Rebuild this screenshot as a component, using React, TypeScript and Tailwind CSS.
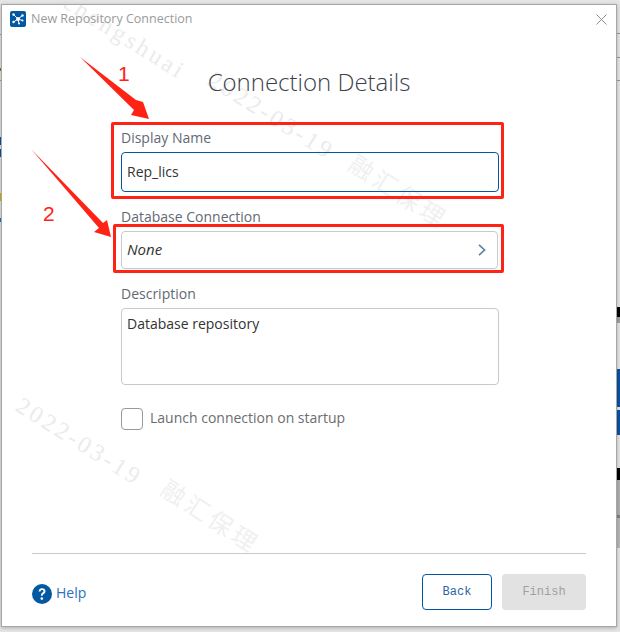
import React from 'react';

const sans = 'font-["Open_Sans","Noto_Sans",sans-serif]';

const Watermark = ({ text, className }: { text: string; className: string }) => (
  <span
    className={`absolute whitespace-nowrap origin-top-left font-['Liberation_Serif','Noto_Sans_CJK_SC',serif] pointer-events-none ${className}`}
  >
    {text}
  </span>
);

// red callout arrow, drawn on top of the screenshot
const Arrow = ({ className, d, w, h }: { className: string; d: string; w: number; h: number }) => (
  <svg className={`absolute ${className}`} width={w} height={h} viewBox={`0 0 ${w} ${h}`}>
    <path d={d} fill="#ff2316" />
  </svg>
);

export default function App() {
  return (
    <div className={`relative flex w-[620px] h-[632px] overflow-hidden bg-[#e6e6e6] ${sans}`}>
      {/* what shows of the window behind the dialog, left edge */}
      <div className="flex flex-col w-px shrink-0">
        <div className="h-[34px]" />
        <div className="h-px bg-[#999]" />
        <div className="h-[33px]" />
        <div className="h-[3px] bg-[#a06a20]" />
        <div className="h-[9px]" />
        <div className="h-px bg-[#999]" />
        <div className="h-[56px]" />
        <div className="h-[8px] bg-[#0a53a8]" />
        <div className="h-[4px]" />
        <div className="h-[8px] bg-[#0a53a8]" />
        <div className="h-[36px]" />
        <div className="h-[8px] bg-[#e0b000]" />
        <div className="h-[17px]" />
        <div className="h-[4px] bg-[#0a7ad0]" />
      </div>

      <div className="relative mt-[4px] w-[616px] h-[623px] shrink-0 flex flex-col overflow-hidden border border-[#a6a6a6] bg-white shadow-[0_1px_4px_rgba(0,0,0,0.25)]">
        {/* watermarks sit under the form */}
        <Watermark text="chengshuai" className="left-[73px] top-[-21px] text-[24px] text-[#ebebeb] rotate-[32deg] tracking-[3.2px]" />
        <Watermark text="2022-03-19" className="left-[218px] top-[57px] text-[24px] text-[#ebebeb] rotate-[32deg] tracking-[3.2px]" />
        <Watermark text="融汇保理" className="left-[359px] top-[142px] text-[24px] text-[#f0f0f0] rotate-[33deg] tracking-[4px]" />
        <Watermark text="2022-03-19" className="left-[26px] top-[383px] text-[24px] text-[#ebebeb] rotate-[32deg] tracking-[3.2px]" />
        <Watermark text="融汇保理" className="left-[171px] top-[467px] text-[24px] text-[#f0f0f0] rotate-[33deg] tracking-[4px]" />

        <div className="relative flex items-center h-[22px] mt-[3px] pl-[8px] pr-[9px]">
          <svg width="16" height="16" viewBox="0 0 16 16" className="shrink-0">
            <rect width="16" height="16" rx="2" fill="#0358a2" />
            <g stroke="#fff" strokeWidth="1">
              <path d="M8 8 3.5 3.5M8 8l4.5-3.5M8 8l4.5 1.5M8 8l-4.5 3M8 8l1 4.5" />
            </g>
            <g fill="#fff">
              <circle cx="8" cy="8" r="2" />
              <circle cx="3.5" cy="3.5" r="1.2" />
              <circle cx="12.5" cy="4.5" r="1.2" />
              <circle cx="12.5" cy="9.5" r="1" />
              <circle cx="3.5" cy="11" r="1.2" />
              <circle cx="9" cy="12.5" r="1" />
            </g>
          </svg>
          <span className="ml-[5px] text-[12.5px] text-[#9b9b9b]">New Repository Connection</span>
          <svg width="11" height="11" viewBox="0 0 11 11" className="ml-auto" stroke="#8c8c8c" strokeWidth="1">
            <path d="M.5.5l10 10M10.5.5l-10 10" />
          </svg>
        </div>

        <h1 className="relative mt-[36px] text-center text-[24px] leading-[32px] font-light text-[#3b3f4c]">Connection Details</h1>

        <div className="relative flex flex-col w-[378px] ml-[119px] mt-[30px] text-[14px]">
          <label className="h-[19px] leading-[19px] text-[#636973]">Display Name</label>
          <div className="mt-[5px] flex items-center h-[40px] px-[5px] pb-[2px] rounded-[4px] border border-[#0058a3] text-[#333]">Rep_lics</div>

          <label className="mt-[15px] h-[19px] leading-[19px] text-[#636973]">Database Connection</label>
          <div className="mt-[5px] flex items-center justify-between h-[38px] w-[377px] pl-[5px] pr-[11px] rounded-[4px] border border-[#c9c9c9] italic text-[15px] text-[#333]">
            <span className="-translate-y-px">None</span>
            <svg width="8" height="12" viewBox="0 0 8 12" fill="none" stroke="#5b7f9f" strokeWidth="1.6">
              <path d="M1 .8 6.6 6 1 11.2" />
            </svg>
          </div>

          <label className="mt-[15px] h-[19px] leading-[19px] text-[#636973]">Description</label>
          <div className="mt-[5px] h-[77px] px-[5px] pt-[5px] rounded-[4px] border border-[#c9c9c9] text-[#333] leading-[19px]">Database repository</div>

          <div className="mt-[22px] flex items-center">
            <span className="w-[22px] h-[22px] rounded-[4px] border border-[#999]" />
            <span className="ml-[7px] pb-[2px] text-[#6d6d6d]">Launch connection on startup</span>
          </div>
        </div>

        <div className="relative mt-auto mx-[30px] border-t border-[#c9c9c9] h-[73px] flex items-start pt-[20px]">
          <div className="mt-[8px] flex items-center gap-[4px]">
            <svg width="20" height="20" viewBox="0 0 20 20">
              <circle cx="10" cy="10" r="10" fill="#0358a2" />
              <path d="M6.6 7.6c.1-2.1 1.5-3.3 3.5-3.3s3.4 1.1 3.4 2.9c0 1.3-.7 2-1.7 2.7-.8.5-1.1.9-1.1 1.8H8.9c0-1.5.4-2.2 1.4-2.9.8-.5 1.2-.9 1.2-1.5 0-.7-.6-1.2-1.4-1.2-.9 0-1.5.5-1.6 1.5z" fill="#fff" />
              <circle cx="9.8" cy="14.6" r="1.3" fill="#fff" />
            </svg>
            <span className="pb-[2px] text-[14px] text-[#2a6fc0]">Help</span>
          </div>
          <div className="ml-auto flex gap-[10px] font-['Liberation_Mono',monospace] text-[12px]">
            <button className="w-[70px] h-[36px] rounded-[4px] border border-[#0058a3] bg-white text-[#2f62a8]">Back</button>
            <button className="w-[84px] h-[36px] rounded-[4px] bg-[#e2e2e2] text-[#a0a0a0]">Finish</button>
          </div>
        </div>
      </div>

      {/* right edge */}
      <div className="flex flex-col w-[3px] shrink-0">
        <div className="h-[33px]" />
        <div className="h-px bg-[#999]" />
        <div className="h-[23px]" />
        <div className="h-px bg-[#999]" />
        <div className="h-[22px]" />
        <div className="h-px bg-[#999]" />
        <div className="h-[226px]" />
        <div className="h-[10px] bg-black" />
        <div className="h-[6px] bg-[#a0a0a0]" />
        <div className="h-[46px]" />
        <div className="h-[38px] bg-[#0a53a8]" />
        <div className="h-[3px] bg-[#e6e6e6]" />
        <div className="h-[25px] bg-[#0a53a8]" />
        <div className="h-[33px]" />
        <div className="h-[12px] bg-black" />
        <div className="h-[35px] bg-[#b0b0b0]" />
        <div className="h-[3px] bg-[#808080]" />
        <div className="h-[30px] bg-[#b8b8b8]" />
      </div>

      {/* annotations */}
      <div className="absolute left-[111px] top-[122px] w-[393px] h-[77px] rounded-[2px] border-[3px] border-[#ff2316]" />
      <div className="absolute left-[113px] top-[224px] w-[391px] h-[49px] rounded-[2px] border-[3px] border-[#ff2316]" />
      <Arrow className="left-[78px] top-[56px]" w={74} h={66} d="M2 1 L58 44 L65 46 L71 63 L53 59 L56 54 Z" />
      <Arrow className="left-[29px] top-[147px]" w={84} h={94} d="M2 2 L74 76 L78 73 L82 90 L65 85 L70 81 Z" />
      <span className="absolute left-[118px] top-[62px] text-[21px] leading-[24px] text-[#ff2316] font-['Liberation_Sans',sans-serif]">1</span>
      <span className="absolute left-[43px] top-[202px] text-[21px] leading-[24px] text-[#ff2316] font-['Liberation_Sans',sans-serif]">2</span>
    </div>
  );
}
